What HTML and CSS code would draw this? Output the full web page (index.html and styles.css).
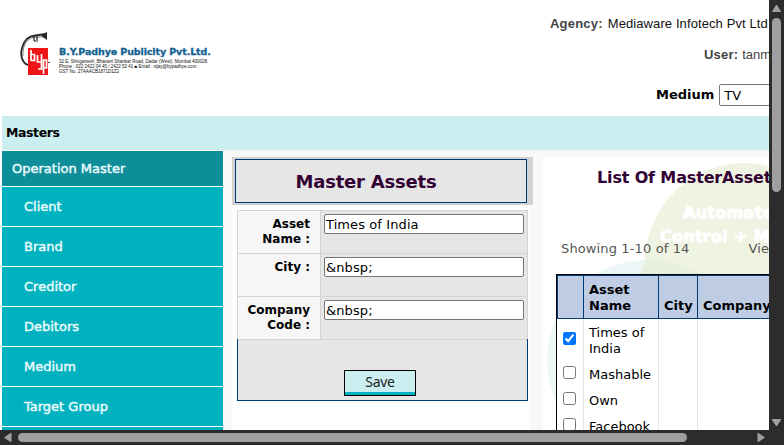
FILE: index.html
```html
<!DOCTYPE html>
<html lang="en">
<head>
<meta charset="utf-8">
<title>Master Assets</title>
<link rel="stylesheet" href="styles.css">
</head>
<body>
<div class="window">
  <div class="page">
    <header class="header">
      <div class="brand">
        <svg class="logo" width="32" height="46" viewBox="0 0 32 46">
          <path d="M8 34C2 32 0 24 2 17C4 9 9 5 15 4.500L26 3" fill="none" stroke="#2a2a2a" stroke-width="1.800"/>
          <path d="M3 25C2 15 7 8 13 6.500L25 5.500" fill="none" stroke="#777" stroke-width="1"/>
          <path d="M22 3.500L27 1V9L22 5.500Z" fill="#252525"/>
          <path d="M14 5V10M17 5V9M14 10H18" fill="none" stroke="#252525" stroke-width="1.200"/>
          <path d="M8 17H28V44H8Z" fill="#ee1519"/>
          <path d="M11 19V30M11 23.500H14.500V29.500H11M17.500 24V31H21M21.500 23V38H18M23.500 43V29H26.500V37H24" fill="none" stroke="#fff" stroke-width="1.700"/>
          <path d="M28 31.500H30" stroke="#444"/>
        </svg>
        <div class="brand-text">
          <div class="brand-name">B.Y.Padhye Publicity Pvt.Ltd.</div>
          <div class="brand-line">32 E, Shivganesh, Bhavani Shankar Road, Dadar (West), Mumbai 400028.</div>
          <div class="brand-line">Phone : 022 2422 04 45 / 2422 52 41 &#9632; Email : vijay@bypadhye.com</div>
          <div class="brand-line">GST No. 27AAACB1871D1Z2</div>
        </div>
      </div>
      <div class="account">
        <div class="agency"><b>Agency:</b> <span>Mediaware Infotech Pvt Ltd</span></div>
        <div class="user"><b>User:</b> <span>tanmay</span></div>
        <div class="medium"><b>Medium</b><span class="select">TV</span></div>
      </div>
    </header>
    <div class="band">Masters</div>
    <div class="content">
      <nav class="menu">
        <div class="menu-head">Operation Master</div>
        <div class="menu-item">Client</div>
        <div class="menu-item">Brand</div>
        <div class="menu-item">Creditor</div>
        <div class="menu-item">Debitors</div>
        <div class="menu-item">Medium</div>
        <div class="menu-item">Target Group</div>
        <div class="menu-item"></div>
      </nav>
      <main class="editor">
        <div class="title-band"><h1 class="title">Master Assets</h1></div>
        <div class="form">
          <div class="row"><label class="label" for="name">Asset<br>Name :</label><div class="cell"><input id="name" class="field" value="Times of India"></div></div>
          <div class="row"><label class="label" for="city">City :</label><div class="cell"><input id="city" class="field" value="&amp;nbsp;"></div></div>
          <div class="row"><label class="label" for="code">Company<br>Code :</label><div class="cell"><input id="code" class="field" value="&amp;nbsp;"></div></div>
          <div class="actions"><button class="save">Save</button></div>
        </div>
      </main>
      <section class="list">
        <svg class="backdrop" width="227" height="273" viewBox="0 0 227 273">
          <circle cx="104" cy="203" r="100" fill="#edf7f7"/>
          <circle cx="202" cy="106" r="100" fill="#eff3e2"/>
          <path d="M102 103A100 100 0 0 1 164 122V206H105A100 100 0 0 1 102 106Z" fill="#e8f0dd"/>
          <text x="140" y="61">Automated</text>
          <text x="117" y="85">Control + Monitor</text>
        </svg>
        <h2 class="list-title">List Of MasterAssets</h2>
        <div class="paging"><span>Showing 1-10 of 14</span><span class="view">View</span></div>
        <div class="table">
          <div class="th"></div><div class="th">Asset Name</div><div class="th">City</div><div class="th">Company</div>
          <div class="td tall check"><input type="checkbox" checked></div><div class="td tall">Times of India</div><div class="td"></div><div class="td"></div>
          <div class="td check"><input type="checkbox"></div><div class="td">Mashable</div><div class="td"></div><div class="td"></div>
          <div class="td check"><input type="checkbox"></div><div class="td">Own</div><div class="td"></div><div class="td"></div>
          <div class="td check"><input type="checkbox"></div><div class="td">Facebook</div><div class="td"></div><div class="td"></div>
        </div>
      </section>
    </div>
  </div>
  <div class="vbar">
    <svg width="15" height="430"><path d="M3 11.5L7 5H8L12 11.5Q12 12 11.5 12H3.5Z"/><rect x="3" y="18" width="9" height="174" rx="4.5"/><path d="M3 419H12V420L8 426H7L3 420Z"/></svg>
  </div>
  <div class="hbar">
    <svg width="784" height="15"><path d="M11.5 3V12H10.5L4.5 8V7L10.5 3Z"/><rect x="18" y="3" width="669" height="9" rx="4.5"/><path d="M757.5 3V12H758.5L764.5 8V7L758.5 3Z"/></svg>
  </div>
</div>
</body>
</html>
```
FILE: styles.css
```css
* { box-sizing: border-box; }
body { margin: 0; overflow: hidden; font: 13px/16px "DejaVu Sans", Verdana, sans-serif; color: #000; }
.window { width: 784px; height: 445px; display: grid; grid-template: 430px 15px / 769px 15px; overflow: hidden; background: #2c2c2c; }
.page { overflow: hidden; background: #fff; min-width: 0; }
.vbar, .hbar { background: #2c2c2c; }
.hbar { grid-column: 1 / 3; }
.vbar svg, .hbar svg { display: block; fill: #9f9f9f; }

.header { height: 116px; display: flex; justify-content: space-between; }
.brand { display: flex; padding: 31px 0 0 20px; }
.logo { flex: none; }
.brand-text { padding: 14px 0 0 7px; white-space: nowrap; }
.brand-name { font: 900 9.5px/14px "DejaVu Sans", sans-serif; color: #12618f; letter-spacing: -.1px; -webkit-text-stroke: .3px #12618f; }
.brand-line { font: 4.5px/5px "Liberation Sans", sans-serif; color: #111; }
.account { width: 230px; font: 13px/16px "Liberation Sans", sans-serif; white-space: nowrap; color: #444; }
.account > div { display: flex; }
.agency { padding: 16px 0 0 11px; gap: 5px; }
.agency b { letter-spacing: .2px; }
.agency span { color: #111; letter-spacing: .1px; }
.user { padding: 15px 0 0 165px; gap: 4px; }
.user b { letter-spacing: .2px; }
.account .medium { padding: 21px 0 0 117px; gap: 5px; align-items: center; color: #000; font: 13px/16px "DejaVu Sans", sans-serif; }
.select { width: 100px; height: 22px; flex: none; padding: 3px 4px; border: 1px solid #767676; border-radius: 2px; }

.band { height: 34px; margin-left: 2px; padding: 9px 4px; background: #cbeef0; font-size: 12.5px; font-weight: bold; letter-spacing: -.4px; }
.content { height: 280px; display: grid; grid-template-columns: 221px 301px 227px; column-gap: 9px; padding-left: 2px; background: linear-gradient(90deg, #fff 2px, #f8f8f8 2px); }
.menu { padding-top: 1px; background: #fff; font-size: 13px; letter-spacing: 0; -webkit-text-stroke: .45px currentColor; color: #e8fbfc; }
.menu-head { height: 35px; padding: 10px; background: #0e8e99; }
.menu-item { height: 39px; margin-top: 1px; padding: 12px 22px; background: #00b2c0; }

.editor { margin-top: 7px; background: linear-gradient(90deg, #fff 298px, #f8f8f8 298px); }
.title-band { width: 301px; height: 48px; padding: 2px 6px 2px 3px; background: #d2d2d2; }
.title { height: 44px; margin: 0; padding: 10px 30px 0 0; border: 1px solid #003a75; background: #e6e6e6; color: #330033; font-size: 18px; line-height: 24px; text-align: center; letter-spacing: -.2px; }
.form { width: 291px; margin: 5px 0 0 5px; background: #e6e6e6; }
.row { height: 43px; display: grid; grid-template-columns: 82px 207px; border: solid #d4d4d4; border-width: 1px 1px 0; }
.label { padding: 6px 10px 0 0; background: #f6f6f6; text-align: right; font-size: 12px; font-weight: bold; line-height: 15px; }
.cell { border-left: 1px solid #d4d4d4; padding: 3px; }
.field { display: block; width: 200px; height: 20px; padding: 1px; border: 1px solid #767676; border-radius: 2px; font: 13px/16px "DejaVu Sans", sans-serif; letter-spacing: .1px; outline: 0; }
.actions { height: 62px; padding-top: 31px; border: solid #003a75; border-width: 0 1px 1px; background: linear-gradient(#d4d4d4 1px, transparent 1px); text-align: center; }
.save { display: block; width: 72px; height: 26px; margin-left: 106px; padding: 0 0 2px; border: 1px solid #000; background: linear-gradient(#cbeef0 21px, #00b2c0 21px); font: 14px/22px "Noto Sans", sans-serif; letter-spacing: -.3px; color: #222; }

.list { position: relative; margin: 7px 0 0 1px; padding-left: 1px; background: #fff; white-space: nowrap; overflow: hidden; }
.backdrop { position: absolute; top: 0; left: 0; }
.backdrop text { font: 900 16px "DejaVu Sans", sans-serif; fill: #fff; stroke: #fff; stroke-width: .9px; letter-spacing: .25px; }
.list-title { position: relative; margin: 10px 0 0 53px; color: #330033; font-size: 16px; line-height: 21px; letter-spacing: -.15px; }
.paging { position: relative; margin: 53px 0 0 17px; display: flex; gap: 59px; color: #555; letter-spacing: .13px; }
.table { position: relative; width: 300px; margin: 17px 0 0 12px; display: grid; grid-template-columns: 27px 75px 39px 158px; border: solid #000; border-width: 1px 0 0 1px; background: #fff; }
.th { height: 44px; display: flex; align-items: flex-end; padding: 0 5px 4px; background: #becde4; border: solid #003a75; border-width: 1px 1px 1px 0; font-weight: bold; white-space: normal; }
.th:first-child { border-left-width: 1px; }
.td { min-height: 26px; padding: 6px 5px 4px; border-right: 1px solid #e6e6e6; white-space: normal; }
.tall { height: 42px; }
.check { display: flex; align-items: center; padding: 0 0 3px 6px; }
.check input { width: 13px; height: 13px; margin: 0; }
```
